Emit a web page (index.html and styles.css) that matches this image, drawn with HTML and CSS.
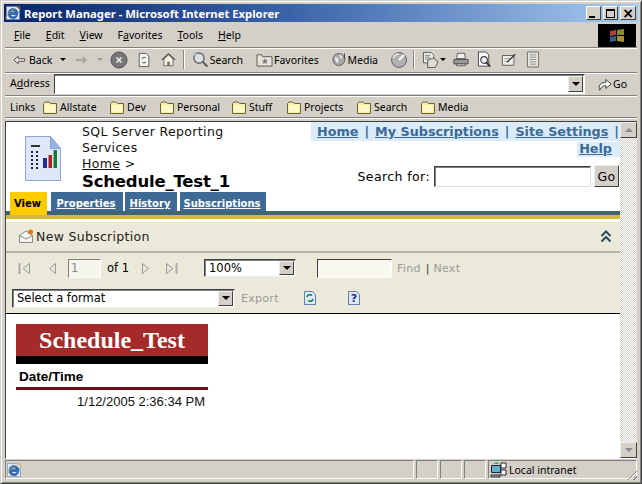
FILE: index.html
```html
<!DOCTYPE html>
<html lang="en">
<head>
<meta charset="utf-8">
<title>Report Manager - Microsoft Internet Explorer</title>
<link rel="stylesheet" href="styles.css">
</head>
<body>
<svg class="defs" width="0" height="0" aria-hidden="true">
  <symbol id="folder" viewBox="0 0 16 16">
    <path d="M1.500 14.500V4.500L3 3h4l1.500 1.500h6v10z" fill="#f7efa0" stroke="#6b6340"/>
    <path d="M3 6h10v7H3z" fill="#fdf8c8"/>
  </symbol>
  <symbol id="ie" viewBox="0 0 16 16">
    <path d="M1.500 1.500h10l3 3v10h-13z" fill="#dfe8f8" stroke="#7088b0" stroke-width=".6"/>
    <path d="M8 3.500a5 5 0 0 0-5 5 5 5 0 0 0 9.600 2H10.400A2.700 2.700 0 0 1 5.400 9.500H13A5 5 0 0 0 8 3.500zM5.500 7.500A2.700 2.700 0 0 1 10.500 7.500z" fill="#2a6fc0" stroke="#103a78" stroke-width=".5"/>
    <path d="M1 14C0 11 8 3 14 1.500c1.500 0 1 3-.5 5" fill="none" stroke="#e8b030" stroke-width=".7"/>
  </symbol>
</svg>
<div class="window">
  <header class="titlebar">
    <svg class="title-icon"><use href="#ie"/></svg>
    <span class="title-text">Report Manager - Microsoft Internet Explorer</span>
    <div class="caption">
      <span class="cap-btn"><i class="g-min"></i></span>
      <span class="cap-btn"><i class="g-max"></i></span>
      <span class="cap-btn x">×</span>
    </div>
  </header>

  <div class="chrome">
    <nav class="menubar">
      <div class="menus">
        <span><u>F</u>ile</span><span><u>E</u>dit</span><span><u>V</u>iew</span><span>F<u>a</u>vorites</span><span><u>T</u>ools</span><span><u>H</u>elp</span>
      </div>
      <div class="flag">
        <svg width="20" height="16" viewBox="0 0 20 16"><path d="M3 3l6-1v5l-6 1z" fill="#a8443c"/><path d="M10 2l7-1v6l-7 0z" fill="#8c8a30"/><path d="M3 9l6-1v5l-6 1z" fill="#3a5c90"/><path d="M10 8h7v6l-7-1z" fill="#a89030"/></svg>
      </div>
    </nav>

    <div class="toolbar">
      <span class="tb tb-back">
        <svg width="13" height="12" viewBox="0 0 15 13"><path d="M1 6.500L6 2v3h7.500v3H6v3z" fill="#e8e8e0" stroke="#444"/></svg><span class="tb-label">Back</span><i class="caret"></i>
      </span>
      <span class="tb tb-fwd">
        <svg width="13" height="12" viewBox="0 0 15 13"><path d="M14 6.500L9 2v3H1v3h8v3z" fill="#a8a8a4"/></svg><i class="caret dim"></i>
      </span>
      <svg class="ic ic-stop" width="18" height="18" viewBox="0 0 18 18"><circle cx="9" cy="9" r="8" fill="#77777a" stroke="#55555a"/><path d="M6.500 6.500l5 5m0-5l-5 5" stroke="#eee" stroke-width="1.500"/></svg>
      <svg class="ic ic-refresh" width="14" height="18" viewBox="0 0 16 18"><path d="M2.500 1.500h8l3 3v12h-11z" fill="#f4f4f0" stroke="#555"/><path d="M6 8a2.500 2.500 0 0 1 4-1.500M10 11a2.500 2.500 0 0 1-4 .5" fill="none" stroke="#666" stroke-width="1.200"/></svg>
      <svg class="ic ic-home" width="15" height="15" viewBox="0 0 18 17"><path d="M1 9l8-7.500L17 9" fill="none" stroke="#444" stroke-width="1.300"/><path d="M3.500 8v8h11V8L9 3z" fill="#f4f2e8" stroke="#555"/><path d="M7.500 11h3v5h-3z" fill="#8a6a50"/></svg>
      <i class="sep"></i>
      <span class="tb tb-search">
        <svg width="17" height="17" viewBox="0 0 18 18"><circle cx="7.500" cy="7.500" r="5.500" fill="#d8e0e4" stroke="#666" stroke-width="1.500"/><path d="M11.500 11.500l5 5" stroke="#555" stroke-width="2"/><circle cx="3" cy="3" r="2" fill="#bbb"/></svg><span class="tb-label">Search</span>
      </span>
      <span class="tb tb-fav">
        <svg width="17" height="15" viewBox="0 0 18 16"><path d="M1 3h5l1 2h10v10H1z" fill="#e6e4da" stroke="#555"/><path d="M9.500 6.500l1 2.200 2.300.3-1.700 1.500.5 2.300-2.100-1.200-2.100 1.200.5-2.300L6.200 9l2.300-.3z" fill="#777"/></svg><span class="tb-label">Favorites</span>
      </span>
      <span class="tb tb-media">
        <svg width="17" height="17" viewBox="0 0 18 18"><circle cx="8" cy="9" r="7" fill="#a8a8a8" stroke="#555"/><path d="M3 6l4 1 1 4-3 2zM9 3l3 2-1 3-2-1z" fill="#e8e8e8"/><path d="M14.500 2v6" stroke="#333"/></svg><span>Media</span>
      </span>
      <svg class="ic ic-hist" width="18" height="18" viewBox="0 0 18 18"><circle cx="9" cy="9" r="7.500" fill="#b0b0b0" stroke="#666"/><path d="M9 9l5-5" stroke="#fff" stroke-width="2"/><path d="M3 7a6 6 0 0 1 6-4" stroke="#eee" stroke-width="1.500" fill="none"/></svg>
      <i class="sep sep-2"></i>
      <span class="tb tb-mail">
        <svg width="18" height="18" viewBox="0 0 18 18"><path d="M1.500 1h8l3 3v8h-11z" fill="#f4f4f0" stroke="#555"/><path d="M3 4h6M3 6h6M3 8h6" stroke="#777"/><path d="M6 9l6-2 5 4-3 6H6z" fill="#dcdcd4" stroke="#555"/></svg><i class="caret"></i>
      </span>
      <svg class="ic ic-print" width="16" height="15" viewBox="0 0 18 16"><path d="M5 1h8l1 6H4z" fill="#eee" stroke="#555"/><path d="M1 8h16v5H1z" fill="#999" stroke="#444"/><path d="M4 13h10v2H4z" fill="#ddd" stroke="#555"/></svg>
      <svg class="ic ic-prev" width="16" height="17" viewBox="0 0 17 18"><path d="M1.500 1h8l3 3v12h-11z" fill="#fff" stroke="#444"/><circle cx="7.500" cy="9.500" r="3.500" fill="#eef" stroke="#444" stroke-width="1.300"/><path d="M10 12l4 4.500" stroke="#333" stroke-width="2"/></svg>
      <svg class="ic ic-edit" width="16" height="15" viewBox="0 0 18 16"><path d="M1.500 3.500h13v11h-13z" fill="#eeeeea" stroke="#555"/><path d="M4 7h7M4 10h5" stroke="#888"/><path d="M7 11l9-9" stroke="#333" stroke-width="1.500"/></svg>
      <svg class="ic ic-disc" width="14" height="17" viewBox="0 0 15 18"><path d="M1.500 1h12v16h-12z" fill="#e8e8e0" stroke="#666"/><path d="M4 4h7M4 6.500h7M4 9h7M4 11.500h7M4 14h7" stroke="#888"/></svg>
    </div>

    <div class="addressbar">
      <span class="addr-label">A<u>d</u>dress</span>
      <div class="addr-box"><span class="dd-btn"><i class="dd-tri"></i></span></div>
      <span class="addr-go">
        <svg width="16" height="18" viewBox="0 0 18 18"><path d="M3 16c-2-5 1-9 7-9V4l6 5-6 5v-3c-3 0-5 1-7 5z" fill="#f4f4f0" stroke="#333"/></svg>Go
      </span>
    </div>

    <div class="linksbar">
      <span class="links-label">Links</span>
      <span class="lnk l1"><svg class="fold"><use href="#folder"/></svg>Allstate</span>
      <span class="lnk l2"><svg class="fold"><use href="#folder"/></svg>Dev</span>
      <span class="lnk l3"><svg class="fold"><use href="#folder"/></svg>Personal</span>
      <span class="lnk l4"><svg class="fold"><use href="#folder"/></svg>Stuff</span>
      <span class="lnk l5"><svg class="fold"><use href="#folder"/></svg>Projects</span>
      <span class="lnk l6"><svg class="fold"><use href="#folder"/></svg>Search</span>
      <span class="lnk l7"><svg class="fold"><use href="#folder"/></svg>Media</span>
    </div>
  </div>

  <div class="viewport">
    <main class="page">
      <section class="head">
        <svg class="report-icon" width="38" height="48" viewBox="0 0 38 48">
          <path d="M1.500 1.500h25l10 12v32h-35z" fill="#dfe8fb" stroke="#8ea4d8"/>
          <path d="M26.500 1.500v12h10z" fill="#9ab4e8" stroke="#8ea4d8"/>
          <path d="M7 11h9" stroke="#333" stroke-width="2"/>
          <path d="M7 17h2M12 17h2M7 21h2M12 21h2M7 25h2M12 25h2M7 29h2M12 29h2M7 33h2M12 33h2" stroke="#222" stroke-width="2.200"/>
          <path d="M19 23h4v10h-4z" fill="#20308c"/><path d="M24.500 20h3.500v13h-3.500z" fill="#b02020"/><path d="M29.500 15h3.500v18h-3.500z" fill="#108030"/>
        </svg>
        <div class="head-title">
          <div class="product">SQL Server Reporting Services</div>
          <div class="crumb"><u>Home</u> &gt;</div>
          <h1>Schedule_Test_1</h1>
        </div>
        <div class="head-right">
          <div class="global-links">
            <div class="gl-row"><a>Home</a><span class="bar">|</span><a>My Subscriptions</a><span class="bar">|</span><a>Site Settings</a><span class="bar">|</span></div>
            <div class="gl-row2"><a>Help</a></div>
          </div>
          <div class="search-row">
            <span>Search for:</span>
            <span class="search-input"></span>
            <span class="search-go">Go</span>
          </div>
        </div>
      </section>

      <div class="tabs">
        <span class="tab active">View</span>
        <span class="tab t-prop">Properties</span>
        <span class="tab t-hist">History</span>
        <span class="tab t-subs">Subscriptions</span>
      </div>
      <div class="band-blue"></div>
      <div class="band-gold"></div>

      <div class="subbar">
        <span class="new-sub">
          <svg width="16" height="15" viewBox="0 0 16 15"><path d="M1.500 6.500L8 2l6.500 4.500v7h-13z" fill="#f4f4f0" stroke="#888"/><path d="M1.500 6.500L8 10l6.500-3.500" fill="none" stroke="#888"/><circle cx="12.500" cy="3" r="2.500" fill="#e07820"/></svg>
          New Subscription
        </span>
        <svg class="collapse" width="12" height="13" viewBox="0 0 12 13"><path d="M1.500 6L6 1.500 10.500 6M1.500 11.500L6 7l4.500 4.500" fill="none" stroke="#2c4c60" stroke-width="2"/></svg>
      </div>

      <div class="viewer">
        <div class="vrow vrow-1">
          <svg class="nav n1" width="13" height="13" viewBox="0 0 13 13"><path d="M1.500 1v11" stroke="#aaa" stroke-width="2"/><path d="M11.500 1.500L5 6.500l6.500 5z" fill="#e8e8d8" stroke="#999"/></svg>
          <svg class="nav n2" width="9" height="13" viewBox="0 0 9 13"><path d="M7.500 1.500L1.500 6.500l6 5z" fill="#e8e8d8" stroke="#999"/></svg>
          <span class="page-input">1</span>
          <span class="of">of 1</span>
          <svg class="nav n3" width="9" height="13" viewBox="0 0 9 13"><path d="M1.500 1.500l6 5-6 5z" fill="#e8e8d8" stroke="#999"/></svg>
          <svg class="nav n4" width="13" height="13" viewBox="0 0 13 13"><path d="M1.500 1.500L8 6.500l-6.500 5z" fill="#e8e8d8" stroke="#999"/><path d="M11.500 1v11" stroke="#aaa" stroke-width="2"/></svg>
          <span class="select zoom-sel">100%<span class="dd-btn"><i class="dd-tri"></i></span></span>
          <span class="find-input"></span>
          <span class="find-txt">Find</span><span class="find-sep">|</span><span class="find-txt">Next</span>
        </div>
        <div class="vrow vrow-2">
          <span class="select fmt-sel">Select a format<span class="dd-btn"><i class="dd-tri"></i></span></span>
          <span class="export">Export</span>
          <svg class="refresh" width="14" height="16" viewBox="0 0 14 16"><path d="M1.500 1.500h8l3 3v10h-11z" fill="#dfe8fb" stroke="#6080b0"/><path d="M4 7a3 3 0 0 1 5-1.500M10 9a3 3 0 0 1-5 1.500" fill="none" stroke="#108030" stroke-width="1.500"/></svg>
          <svg class="help-ic" width="14" height="16" viewBox="0 0 14 16"><path d="M1.500 1.500h8l3 3v10h-11z" fill="#dfe8fb" stroke="#6080b0"/><text x="7" y="12" text-anchor="middle" class="help-q">?</text></svg>
        </div>
      </div>

      <article class="report">
        <div class="report-inner">
          <div class="report-title">Schedule_Test</div>
          <div class="report-black"></div>
          <div class="report-col">Date/Time</div>
          <div class="report-rule"></div>
          <div class="report-val">1/12/2005 2:36:34 PM</div>
        </div>
      </article>
    </main>

    <aside class="scrollbar">
      <span class="sb-btn"><i class="tri up"></i></span>
      <span class="sb-track"></span>
      <span class="sb-btn"><i class="tri down"></i></span>
    </aside>
  </div>

  <footer class="status">
    <div class="st-main"><svg class="st-ie"><use href="#ie"/></svg></div>
    <div class="st-cell"></div><div class="st-cell"></div><div class="st-cell"></div>
    <div class="st-zone">
      <svg width="17" height="17" viewBox="0 0 17 17"><path d="M1.500 4.500h9v7h-9z" fill="#60b0d0" stroke="#223"/><path d="M11 2h5v5h-5zM11 9h5v5h-5z" fill="#fff" stroke="#223"/><path d="M1 14h9v2H1z" fill="#bbb" stroke="#223"/><path d="M3 3l4-2 2 2" fill="#38a048"/></svg>
      Local intranet
    </div>
    <div class="grip"></div>
  </footer>
</div>
</body>
</html>
```
FILE: styles.css
```css
* { box-sizing: border-box; }
html, body { margin: 0; padding: 0; }
body { width: 642px; height: 484px; overflow: hidden; background: #d4d0c8; font-family: "Noto Sans", "Open Sans", "DejaVu Sans", sans-serif; color: #000; }
.defs { position: absolute; }
i { display: block; font-style: normal; }

.window { width: 642px; height: 484px; padding: 3px 4px 3px; border: 1px solid #404040; border-top-color: #d4d0c8; border-left-color: #d4d0c8; box-shadow: inset 1px 1px 0 #fff, inset -1px -1px 0 #808080; display: flex; flex-direction: column; }

.titlebar { height: 18px; flex: none; margin: 0 -1px; display: flex; align-items: center; padding: 0 2px 0 1px; background: linear-gradient(90deg, #0a246a 0%, #3b64a8 45%, #a6caf0 100%); color: #fff; }
.title-icon { width: 16px; height: 16px; margin-right: 3px; flex: none; }
.title-text { font: bold 11.300px "Noto Sans", sans-serif; white-space: nowrap; flex: 1; }
.caption { display: flex; }
.cap-btn { width: 15px; height: 14px; background: #d4d0c8; border: 1px solid; border-color: #fff #404040 #404040 #fff; margin-left: 2px; color: #000; display: flex; align-items: center; justify-content: center; font: bold 14px/1 "DejaVu Sans", sans-serif; }
.cap-btn.x { margin-left: 2px; width: 16px; }
.g-min { width: 6px; height: 2px; background: #000; margin-top: 7px; margin-right: 3px; }
.g-max { width: 9px; height: 9px; border: 1px solid #000; border-top-width: 2px; }

.chrome { flex: none; font: 10.500px "Noto Sans", "Open Sans", sans-serif; }
.menubar { height: 24px; margin-top: 2px; border-bottom: 1px solid #808080; box-shadow: 0 1px 0 #fff; display: flex; justify-content: space-between; }
.menus { display: flex; align-items: center; padding-left: 9px; gap: 15px; padding-bottom: 2px; }
.flag { width: 38px; height: 23px; background: #000; display: flex; align-items: center; justify-content: center; margin-right: 1px; }

.toolbar { height: 25px; display: flex; align-items: center; border-bottom: 1px solid #808080; box-shadow: 0 1px 0 #fff; padding-left: 8px; padding-bottom: 1px; }
.tb { display: flex; align-items: center; white-space: nowrap; flex: none; }
.caret { width: 0; height: 0; border: 3px solid transparent; border-top: 3px solid #000; border-bottom: 0; flex: none; }
.caret.dim { border-top-color: #999; }
.tb-back { width: 53px; }
.tb-label { margin-left: 3px; }
.tb-back .caret { margin-left: auto; }
.tb-fwd { margin-left: 9px; }
.tb-fwd .caret { margin-left: 9px; }
.ic { flex: none; }
.ic-stop { margin-left: 7px; }
.ic-refresh { margin-left: 9px; }
.ic-home { margin-left: 10px; }
.sep { width: 1px; height: 19px; background: #888; box-shadow: 1px 0 0 #fff; margin: 0 8px 0 7px; flex: none; }
.sep-2 { margin-left: 5px; }
.tb-search { width: 51px; }
.tb-search .tb-label { margin-left: 1px; }
.tb-fav { width: 63px; margin-left: 13px; }
.tb-fav .tb-label { margin-left: 1px; }
.tb-media { width: 46px; margin-left: 13px; }
.ic-hist { margin-left: 12px; }
.tb-mail { width: 24px; }
.tb-mail .caret { margin-left: 1px; }
.ic-print { margin-left: 7px; }
.ic-prev { margin-left: 8px; }
.ic-edit { margin-left: 8px; }
.ic-disc { margin-left: 9px; }

.addressbar { height: 23px; display: flex; align-items: center; border-bottom: 1px solid #808080; box-shadow: 0 1px 0 #fff; padding-left: 5px; }
.addr-label { width: 44px; flex: none; margin-top: -2px; }
.addr-box { width: 531px; height: 20px; background: #fff; border: 1px solid; border-color: #404040 #fff #fff #404040; box-shadow: inset 0 1px 0 #808080; display: flex; justify-content: flex-end; align-items: stretch; padding: 1px; flex: none; }
.dd-btn { width: 15px; flex: none; background: #d4d0c8; border: 1px solid; border-color: #eee #404040 #404040 #eee; display: flex; align-items: center; justify-content: center; }
.dd-tri { width: 0; height: 0; border: 4px solid transparent; border-top: 4px solid #000; border-bottom: 0; }
.addr-go { display: flex; align-items: center; margin-left: 12px; }

.linksbar { height: 22px; display: flex; align-items: center; padding-left: 5px; padding-top: 1px; border-bottom: 1px solid #808080; box-shadow: 0 1px 0 #fff; }
.links-label { width: 32px; flex: none; }
.lnk { display: flex; align-items: center; gap: 2px; flex: none; white-space: nowrap; }
.fold { width: 16px; height: 16px; flex: none; }
.l1 { width: 67px; } .l2 { width: 50px; } .l3 { width: 72px; } .l4 { width: 55px; } .l5 { width: 70px; } .l6 { width: 64px; }

.viewport { flex: 1; min-height: 0; display: flex; margin-top: 3px; border: 1px solid #404040; border-right: 0; border-bottom-color: #fff; background: #fff; overflow: hidden; }
.page { width: 614px; flex: none; background: #fff; overflow: hidden; font-family: "DejaVu Sans", Verdana, sans-serif; display: flex; flex-direction: column; }

.head { height: 70px; flex: none; display: flex; padding-left: 18px; }
.report-icon { flex: none; margin-top: 13px; width: 38px; height: 48px; }
.head-title { width: 160px; margin-left: 20px; padding-top: 2px; font-size: 12.500px; line-height: 16px; letter-spacing: .35px; color: #111; }
.head-title h1 { font: bold 16.500px/19px "DejaVu Sans", sans-serif; margin: 0; white-space: nowrap; letter-spacing: -.2px; color: #000; }
.head-right { flex: 1; display: flex; flex-direction: column; align-items: flex-end; min-width: 0; }
.global-links { width: 309px; font: bold 12.750px/16px "DejaVu Sans", sans-serif; color: #3b6a96; height: 34px; text-align: right; }
.gl-row { height: 19px; background: #dcebf8; padding-top: 2px; padding-right: 1px; display: flex; justify-content: flex-end; white-space: nowrap; }
.gl-row2 { height: 15px; }
.gl-row2 a { display: inline-block; height: 15px; padding: 0 8px 0 2px; line-height: 14px; background: #dcebf8; }
.global-links a { text-decoration: underline; }
.bar { margin: 0 6px; }
.gl-row .bar:last-child { margin-right: 0; }
.search-row { display: flex; align-items: center; margin-top: 9px; margin-right: 1px; font-size: 12.500px; letter-spacing: .4px; gap: 4px; }
.search-input { width: 157px; height: 21px; margin-right: -1px; border: 1px solid; border-color: #404040 #ddd #ddd #404040; background: #fff; box-shadow: inset 1px 1px 0 #808080; }
.search-go { width: 25px; height: 22px; background: #d4d0c8; border: 1px solid; border-color: #eee #404040 #404040 #eee; display: flex; align-items: center; justify-content: center; }

.tabs { flex: none; height: 19px; display: flex; padding-left: 4px; font: bold 10px "DejaVu Sans", sans-serif; }
.tab { background: #3d6b96; color: #fff; text-decoration: underline; height: 24px; display: flex; align-items: flex-start; justify-content: center; padding-top: 6px; padding-right: 2px; }
.tab.active { width: 37px; background: #ffcc00; color: #000; text-decoration: none; position: relative; z-index: 1; height: 23px; }
.t-prop { width: 72px; margin-left: 4px; }
.t-hist { width: 52px; margin-left: 2px; }
.t-subs { width: 86px; margin-left: 3px; }
.band-blue { flex: none; height: 4px; background: #3e6478; }
.band-gold { flex: none; height: 4px; background: #d8b838; margin-bottom: 3px; }

.subbar { flex: none; height: 31px; background: #ebe9d9; display: flex; align-items: center; justify-content: space-between; padding: 0 8px 0 12px; border-bottom: 2px solid #b5b3a4; font-size: 12.500px; letter-spacing: .3px; color: #222; }
.new-sub { display: flex; align-items: center; gap: 2px; }

.viewer { flex: none; height: 61px; background: #ebe9d9; border-bottom: 1px solid #000; font-size: 11.500px; display: flex; flex-direction: column; padding-top: 4px; }
.vrow { display: flex; align-items: center; height: 22px; flex: none; }
.vrow-1 { padding-left: 12px; margin-bottom: 9px; }
.vrow-2 { padding-left: 6px; height: 20px; }
.nav { flex: none; }
.n2 { margin-left: 17px; }
.page-input { width: 33px; height: 19px; margin-left: 11px; background: #f6f6ee; color: #888; border: 1px solid; border-color: #808080 #fff #fff #808080; padding-left: 2px; line-height: 16px; }
.of { margin-left: 6px; width: 27px; }
.n3 { margin-left: 7px; }
.n4 { margin-left: 15px; }
.select { display: flex; justify-content: space-between; align-items: stretch; background: #fff; border: 1px solid; border-color: #404040 #eee #eee #404040; box-shadow: inset 1px 1px 0 #808080; padding: 1px 1px 1px 4px; line-height: 15px; }
.zoom-sel { width: 92px; height: 18px; margin-left: 26px; }
.fmt-sel { width: 223px; height: 19px; }
.find-input { width: 75px; height: 19px; margin-left: 21px; background: #f8f8f0; border: 1px solid; border-color: #404040 #fff #fff #404040; }
.find-txt { color: #999; margin-left: 5px; font-size: 11px; letter-spacing: .3px; }
.find-sep { color: #333; margin-left: 5px; font-size: 11px; }
.find-sep + .find-txt { margin-left: 4px; }
.export { color: #999; margin-left: 6px; width: 62px; flex: none; font-size: 11px; letter-spacing: .3px; }
.refresh { flex: none; }
.help-ic { flex: none; margin-left: 30px; }
.help-q { font: bold 11px "DejaVu Sans", sans-serif; fill: #20308c; }

.report { flex: 1; min-height: 0; padding: 10px 0 0 10px; background: #fff; }
.report-inner { width: 192px; font-family: "Liberation Sans", Arial, sans-serif; }
.report-title { height: 32px; background: #a52a2a; color: #fff; text-align: center; font: bold 24px/32px "Liberation Serif", serif; }
.report-black { height: 8px; background: #000; }
.report-col { height: 23px; padding-left: 3px; font-weight: bold; font-size: 13.500px; line-height: 25px; color: #000; }
.report-rule { height: 3px; background: #6b0f14; }
.report-val { text-align: right; padding: 4px 3px 0 0; font-size: 13px; line-height: 15px; color: #111; }

.scrollbar { width: 17px; flex: none; display: flex; flex-direction: column; background: repeating-conic-gradient(#d4d0c8 0 25%, #fff 0 50%) 0 0 / 2px 2px; }
.sb-btn { height: 16px; flex: none; background: #d4d0c8; border: 1px solid; border-color: #eee #404040 #404040 #eee; display: flex; align-items: center; justify-content: center; }
.sb-track { flex: 1; }
.tri { width: 0; height: 0; border: 4px solid transparent; }
.tri.up { border-bottom: 4px solid #888; border-top: 0; }
.tri.down { border-top: 4px solid #888; border-bottom: 0; }

.status { height: 20px; flex: none; display: flex; font: 10.500px "Noto Sans", "Open Sans", sans-serif; margin-top: 1px; position: relative; gap: 2px; }
.st-main, .st-cell, .st-zone { border: 1px solid; border-color: #808080 #fff #fff #808080; height: 19px; }
.st-main { width: 409px; display: flex; align-items: center; }
.st-ie { width: 16px; height: 16px; }
.st-cell { width: 22px; }
.st-zone { flex: 1; display: flex; align-items: center; gap: 2px; white-space: nowrap; padding-left: 1px; }
.grip { position: absolute; right: 0; bottom: 0; width: 12px; height: 12px; background: repeating-linear-gradient(135deg, transparent 0 2px, #808080 2px 3px, #fff 3px 4px); clip-path: polygon(100% 0, 100% 100%, 0 100%); }
```
